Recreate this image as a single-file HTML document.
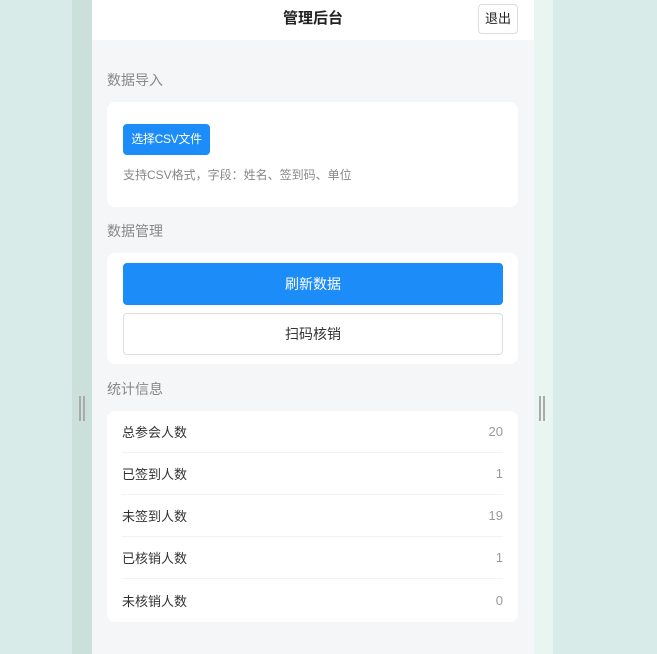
<!DOCTYPE html>
<html><head><meta charset="utf-8"><style>
*{margin:0;padding:0;box-sizing:border-box}
body{width:657px;height:654px;overflow:hidden;background:#d9ebe8;font-family:"Liberation Sans","Noto Sans CJK SC",sans-serif;position:relative}
.ls{position:absolute;left:72px;top:0;width:20px;height:654px;background:#cbdfdb}
.rs{position:absolute;left:534px;top:0;width:19px;height:654px;background:#e8f5f1}
.h{position:absolute;top:396px;width:6px;height:25px;border-left:2px solid #aaa;border-right:2px solid #aaa}
.pg{position:absolute;left:92px;top:0;width:442px;height:654px;background:#f5f6f8}
.hd{height:40px;background:#fff;position:relative;text-align:center;font-size:15px;font-weight:bold;line-height:38px;color:#222}
.out{position:absolute;right:16px;top:4px;width:40px;height:30px;border:1px solid #ddd;border-radius:4px;font-size:13px;font-weight:normal;line-height:28px;color:#222;background:#fff}
.t{position:absolute;left:15px;font-size:14px;color:#888}
.card{position:absolute;left:15px;width:411px;background:#fff;border-radius:8px}
.b1{position:absolute;left:16px;top:22px;width:87px;height:31px;background:#1b8cf8;border-radius:4px;color:#fff;font-size:12px;line-height:31px;text-align:center;letter-spacing:-0.3px}
.row{height:42px;margin:0 15px;border-bottom:1px solid #f3f3f3;display:flex;justify-content:space-between;align-items:center;font-size:13px;color:#333}
.row span:last-child{color:#999}
</style></head><body>
<div class="ls"></div><div class="rs"></div>
<div class="h" style="left:79px"></div><div class="h" style="left:539px"></div>
<div class="pg">
<div class="hd">管理后台<div class="out">退出</div></div>
<div class="t" style="top:70px">数据导入</div>
<div class="card" style="top:102px;height:105px">
<div class="b1">选择CSV文件</div>
<div style="position:absolute;left:16px;top:64px;font-size:12px;color:#888">支持CSV格式，字段：姓名、签到码、单位</div>
</div>
<div class="t" style="top:221px">数据管理</div>
<div class="card" style="top:253px;height:111px">
<div style="position:absolute;left:16px;top:10px;width:380px;height:42px;background:#1b8cf8;border-radius:4px;color:#fff;font-size:14px;line-height:42px;text-align:center">刷新数据</div>
<div style="position:absolute;left:16px;top:60px;width:380px;height:42px;border:1px solid #ddd;border-radius:4px;color:#333;font-size:14px;line-height:40px;text-align:center">扫码核销</div>
</div>
<div class="t" style="top:379px">统计信息</div>
<div class="card" style="top:411px;height:211px">
<div class="row"><span>总参会人数</span><span>20</span></div>
<div class="row"><span>已签到人数</span><span>1</span></div>
<div class="row"><span>未签到人数</span><span>19</span></div>
<div class="row"><span>已核销人数</span><span>1</span></div>
<div class="row" style="border:none"><span>未核销人数</span><span>0</span></div>
</div>
</div>
</body></html>
